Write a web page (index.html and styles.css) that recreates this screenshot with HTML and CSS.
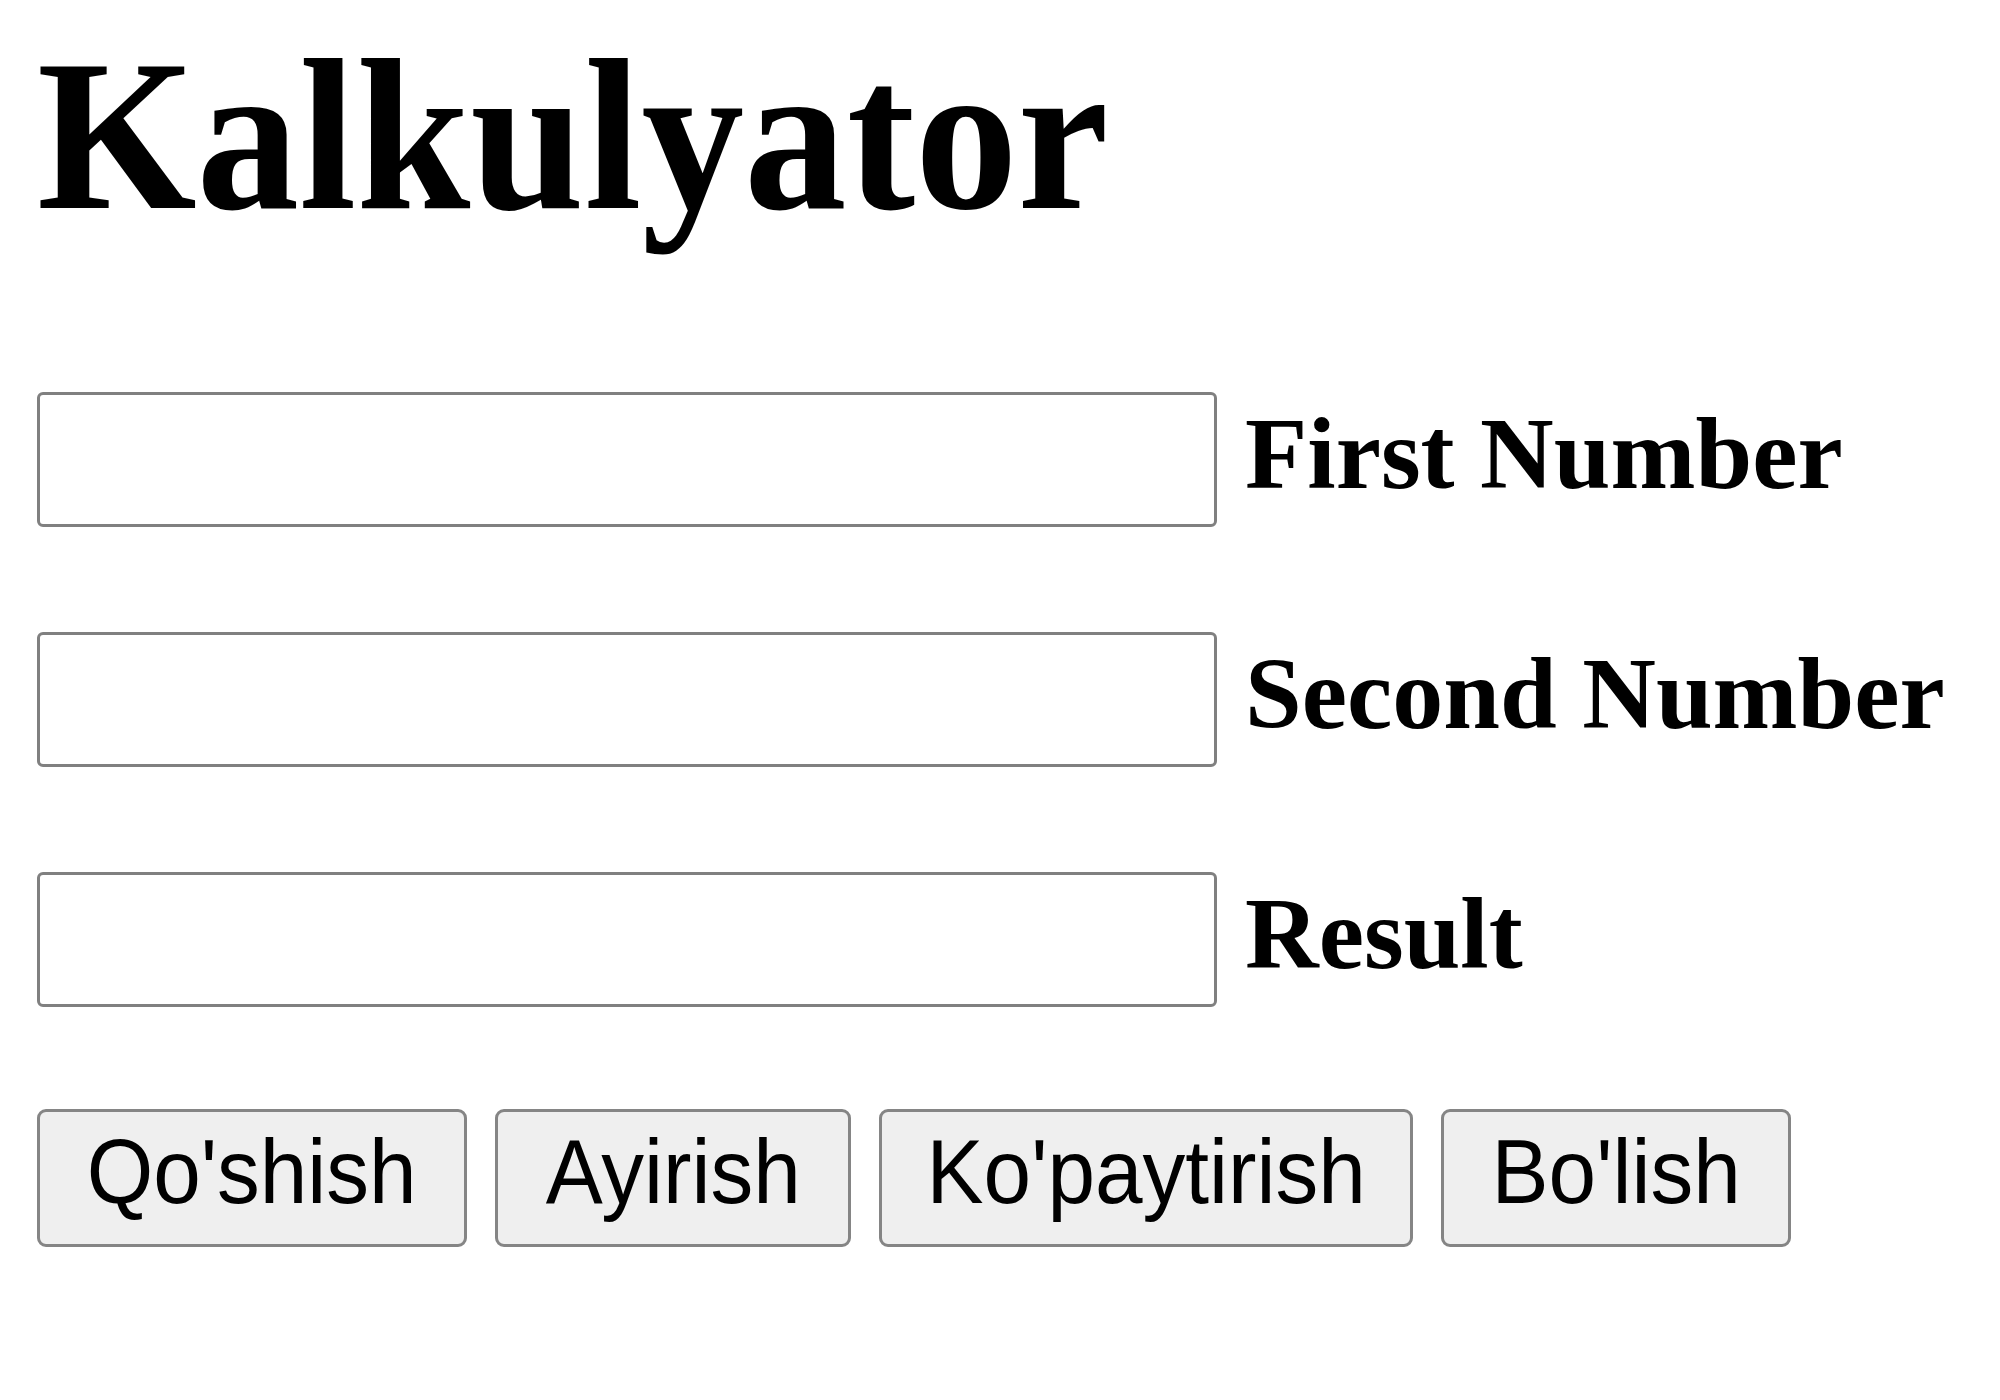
FILE: index.html
```html
<!DOCTYPE html>
<html lang="uz">
<head>
<meta charset="utf-8">
<title>Kalkulyator</title>
<link rel="stylesheet" href="styles.css">
</head>
<body>
<h1 class="title"><span class="squeeze">Kalkulyator</span></h1>
<form class="calc">
  <div class="row">
    <input class="field" type="text" id="a">
    <label class="label" for="a">First Number</label>
  </div>
  <div class="row">
    <input class="field" type="text" id="b">
    <label class="label" for="b">Second Number</label>
  </div>
  <div class="row">
    <input class="field" type="text" id="r">
    <label class="label" for="r">Result</label>
  </div>
  <div class="buttons">
    <button type="button" class="btn"><span class="btn-text">Qo'shish</span></button>
    <button type="button" class="btn"><span class="btn-text">Ayirish</span></button>
    <button type="button" class="btn"><span class="btn-text">Ko'paytirish</span></button>
    <button type="button" class="btn"><span class="btn-text">Bo'lish</span></button>
  </div>
</form>
</body>
</html>
```
FILE: styles.css
```css
html, body {
  margin: 0;
  background: #ffffff;
}
body {
  padding: 0 37px;
  font-family: "Liberation Serif", "Times New Roman", serif;
  color: #000;
}
.squeeze {
  display: inline-block;
  transform-origin: left center;
}
.title {
  margin: 20px 0 0;
  font-size: 216px;
  font-weight: bold;
  line-height: 232px;
}
.title .squeeze {
  transform: scaleX(0.95);
}
.calc {
  display: flex;
  flex-direction: column;
  margin-top: 140px;
}
.row {
  display: flex;
  align-items: center;
  gap: 28px;
  margin-bottom: 105px;
}
.field {
  box-sizing: border-box;
  width: 1180px;
  height: 135px;
  margin: 0;
  border: 3px solid #808080;
  border-radius: 6px;
  background: #fff;
  padding: 0 10px;
  font-size: 90px;
}
.label {
  font-size: 102px;
  font-weight: bold;
  line-height: 117px;
  padding-bottom: 12px;
}
.buttons {
  display: grid;
  grid-template-columns: 430px 356px 534px 350px;
  gap: 28px;
  margin-top: -3px;
}
.btn {
  box-sizing: border-box;
  height: 138px;
  margin: 0;
  padding: 0 0 12px;
  border: 3px solid #858585;
  border-radius: 9px;
  background: #efefef;
  color: #000;
  font-family: "Liberation Sans", Arial, sans-serif;
  font-size: 90px;
  line-height: 100px;
  text-align: center;
}
.btn-text {
  display: inline-block;
  transform: scaleX(0.95);
}
```
